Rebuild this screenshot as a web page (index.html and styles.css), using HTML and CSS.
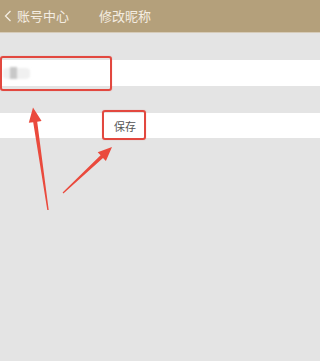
FILE: index.html
```html
<!DOCTYPE html>
<html lang="zh">
<head>
<meta charset="utf-8">
<link rel="stylesheet" href="styles.css">
</head>
<body>
<div class="page">
  <header class="topbar">
    <div class="back">
      <svg class="chev" width="8" height="12" viewBox="0 0 8 12"><polyline points="6.5,1 1.5,6 6.5,11" fill="none" stroke="#f4ede2" stroke-width="1.3"/></svg>
      <span class="back-text">账号中心</span>
    </div>
    <div class="title">修改昵称</div>
  </header>
  <main class="content">
    <div class="row name-row">
      <span class="blur-name"><span class="blur-core"></span></span>
    </div>
    <div class="row save-row">
      <span class="save">保存</span>
    </div>
  </main>
  <div class="mark mark-name"></div>
  <div class="mark mark-save"></div>
  <svg class="arrows" width="249" height="361" viewBox="0 0 249 361">
    <polygon fill="#ea4a3d" points="33,107.5 41.6,120.9 37.2,121.8 48.7,209.9 47.3,210.1 33.2,122.2 28.8,122.8"/>
    <polygon fill="#ea4a3d" points="112,147 105.9,161 103,157.9 63.4,193.4 62.6,192.6 100.6,155.3 97.7,152.2"/>
  </svg>
</div>
</body>
</html>
```

FILE: styles.css
```css
html, body {
  margin: 0;
  padding: 0;
}
body {
  background: #e4e4e4;
  font-family: "Noto Sans CJK SC", "Noto Sans", sans-serif;
}
.page {
  position: relative;
  min-height: 361px;
  overflow: hidden;
}
.topbar {
  height: 32px;
  background: #b4a07b;
  display: flex;
  align-items: center;
  border-bottom: 1px solid #d6cbb8;
}
.back {
  display: flex;
  align-items: center;
  padding-left: 4px;
  width: 95px;
}
.chev {
  display: block;
  margin-right: 5px;
}
.back-text, .title {
  color: #f4ede2;
  font-size: 13px;
  line-height: 16px;
}
.content {
  padding-top: 27px;
  display: flex;
  flex-direction: column;
  gap: 27px;
}
.row {
  background: #ffffff;
  display: flex;
  align-items: center;
}
.name-row {
  height: 26px;
}
.save-row {
  height: 25px;
}
.blur-name {
  display: block;
  margin-left: 3px;
  width: 27px;
  height: 11px;
  background: #f0f0f0;
  border-radius: 4px;
  position: relative;
  filter: blur(0.8px);
}
.blur-core {
  position: absolute;
  left: 7px;
  top: -1px;
  width: 7px;
  height: 12px;
  background: #c8c8c8;
}
.save {
  margin-left: 114px;
  font-size: 11px;
  color: #555555;
  line-height: 14px;
}
.mark {
  position: absolute;
  border: 2px solid #e2483f;
  border-radius: 3px;
  box-shadow: 0 0 1px rgba(226, 72, 63, 0.5);
  box-sizing: border-box;
}
.mark-name {
  left: 0;
  top: 56px;
  width: 112px;
  height: 35px;
}
.mark-save {
  left: 102px;
  top: 110px;
  width: 44px;
  height: 30px;
}
.arrows {
  position: absolute;
  left: 0;
  top: 0;
}
```
